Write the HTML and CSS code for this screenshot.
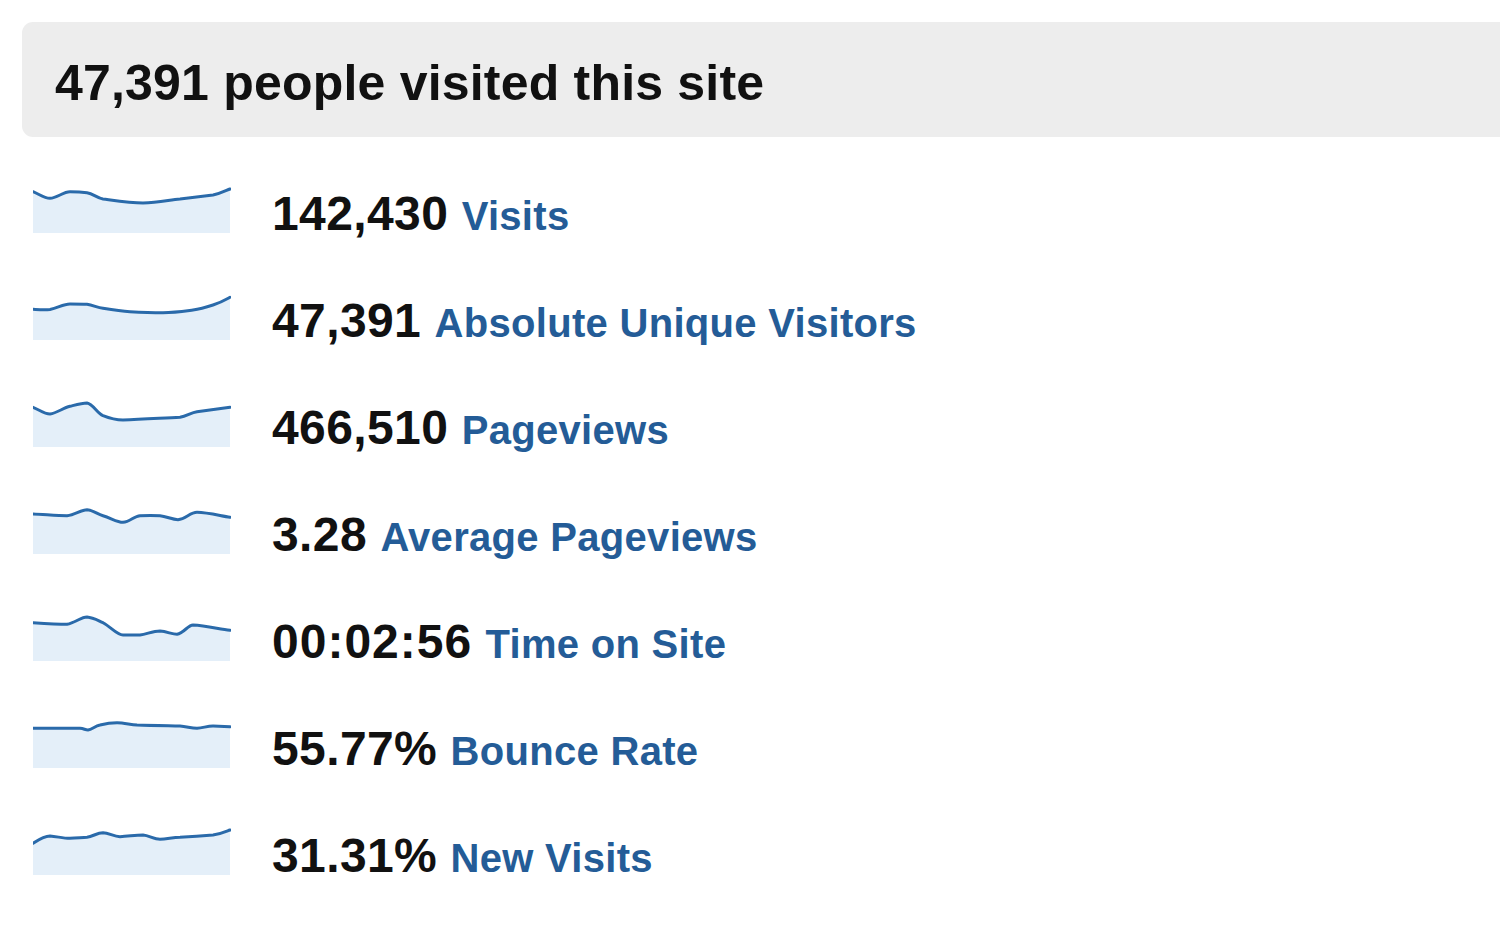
FILE: index.html
```html
<!DOCTYPE html>
<html>
<head>
<meta charset="utf-8">
<link rel="stylesheet" href="styles.css">
</head>
<body>
<div class="page">
  <div class="header">47,391 people visited this site</div>
  <div class="rows">
    <div class="row">
      <svg class="spark" viewBox="0 0 198 50" width="198" height="50">
        <path class="fill" d="M0,8.7 C6,11 11,15.3 17,15.3 C24,15.3 30,8.7 37,8.7 C44,8.7 49,9 54,9.7 C60,10.5 64,15 70,16 C85,18 98,20 110,20 C125,20 136,17 147,16 C160,14.5 172,13 180,12 C188,10.5 193,7.5 197,6 L197,50 L0,50 Z"/>
        <path class="line" d="M0,8.7 C6,11 11,15.3 17,15.3 C24,15.3 30,8.7 37,8.7 C44,8.7 49,9 54,9.7 C60,10.5 64,15 70,16 C85,18 98,20 110,20 C125,20 136,17 147,16 C160,14.5 172,13 180,12 C188,10.5 193,7.5 197,6"/>
      </svg>
      <div class="text"><span class="num">142,430</span> <span class="label">Visits</span></div>
    </div>
    <div class="row">
      <svg class="spark" viewBox="0 0 198 50" width="198" height="50">
        <path class="fill" d="M0,19.3 C6,19.6 11,20 17,19.5 C25,18 30,14 37,14 C44,14 49,14 54,14.3 C60,15 64,17.5 70,18.3 C80,20 88,21.3 97,21.7 C108,22.3 120,22.7 130,22.7 C142,22.5 152,21 160,20 C168,19 174,17 180,15 C188,12.5 193,9.5 197,7.3 L197,50 L0,50 Z"/>
        <path class="line" d="M0,19.3 C6,19.6 11,20 17,19.5 C25,18 30,14 37,14 C44,14 49,14 54,14.3 C60,15 64,17.5 70,18.3 C80,20 88,21.3 97,21.7 C108,22.3 120,22.7 130,22.7 C142,22.5 152,21 160,20 C168,19 174,17 180,15 C188,12.5 193,9.5 197,7.3"/>
      </svg>
      <div class="text"><span class="num">47,391</span> <span class="label">Absolute Unique Visitors</span></div>
    </div>
    <div class="row">
      <svg class="spark" viewBox="0 0 198 50" width="198" height="50">
        <path class="fill" d="M0,10.3 C6,12.5 11,17 17,17 C24,16 30,11 37,9.3 C44,7.5 49,6 54,6 C60,7 64,16 70,18.7 C77,21.5 83,23 90,23 C110,22.5 130,21 147,20.3 C154,19 158,15.5 164,14.7 C177,13 188,11.5 197,10.3 L197,50 L0,50 Z"/>
        <path class="line" d="M0,10.3 C6,12.5 11,17 17,17 C24,16 30,11 37,9.3 C44,7.5 49,6 54,6 C60,7 64,16 70,18.7 C77,21.5 83,23 90,23 C110,22.5 130,21 147,20.3 C154,19 158,15.5 164,14.7 C177,13 188,11.5 197,10.3"/>
      </svg>
      <div class="text"><span class="num">466,510</span> <span class="label">Pageviews</span></div>
    </div>
    <div class="row">
      <svg class="spark" viewBox="0 0 198 50" width="198" height="50">
        <path class="fill" d="M0,10 C12,10.5 24,11.7 34,11.7 C42,11 48,5.7 54,5.7 C60,6 64,10 70,11.7 C78,14 84,18.3 90,18.3 C97,18 101,12 107,11.7 C114,11.5 121,11.5 127,11.7 C134,12.5 139,15.7 145,15.7 C153,15 157,8.3 164,8.3 C175,8.5 188,12 197,13.3 L197,50 L0,50 Z"/>
        <path class="line" d="M0,10 C12,10.5 24,11.7 34,11.7 C42,11 48,5.7 54,5.7 C60,6 64,10 70,11.7 C78,14 84,18.3 90,18.3 C97,18 101,12 107,11.7 C114,11.5 121,11.5 127,11.7 C134,12.5 139,15.7 145,15.7 C153,15 157,8.3 164,8.3 C175,8.5 188,12 197,13.3"/>
      </svg>
      <div class="text"><span class="num">3.28</span> <span class="label">Average Pageviews</span></div>
    </div>
    <div class="row">
      <svg class="spark" viewBox="0 0 198 50" width="198" height="50">
        <path class="fill" d="M0,11.7 C12,12.5 24,13.3 34,13.3 C42,12 48,6 54,6 C60,6.5 64,9 70,11.7 C78,16 84,24 90,24 C96,24 101,24 107,24 C114,23 120,20 127,20 C134,20.5 139,23.3 144,23.3 C151,22 155,14 160,14 C173,14.5 186,18 197,19.3 L197,50 L0,50 Z"/>
        <path class="line" d="M0,11.7 C12,12.5 24,13.3 34,13.3 C42,12 48,6 54,6 C60,6.5 64,9 70,11.7 C78,16 84,24 90,24 C96,24 101,24 107,24 C114,23 120,20 127,20 C134,20.5 139,23.3 144,23.3 C151,22 155,14 160,14 C173,14.5 186,18 197,19.3"/>
      </svg>
      <div class="text"><span class="num time">00:02:56</span> <span class="label">Time on Site</span></div>
    </div>
    <div class="row">
      <svg class="spark" viewBox="0 0 198 50" width="198" height="50">
        <path class="fill" d="M0,10.3 C15,10.3 32,10.3 47,10.3 C51,10.5 52,12 55,12 C59,11.5 62,8 67,7 C73,5.5 78,4.7 84,4.7 C91,4.8 97,6.5 104,7 C118,7.5 133,7.7 147,8 C154,8.5 158,10.3 164,10.3 C170,10 174,8 180,8 C186,8.2 192,8.5 197,8.7 L197,50 L0,50 Z"/>
        <path class="line" d="M0,10.3 C15,10.3 32,10.3 47,10.3 C51,10.5 52,12 55,12 C59,11.5 62,8 67,7 C73,5.5 78,4.7 84,4.7 C91,4.8 97,6.5 104,7 C118,7.5 133,7.7 147,8 C154,8.5 158,10.3 164,10.3 C170,10 174,8 180,8 C186,8.2 192,8.5 197,8.7"/>
      </svg>
      <div class="text"><span class="num">55.77%</span> <span class="label">Bounce Rate</span></div>
    </div>
    <div class="row">
      <svg class="spark" viewBox="0 0 198 50" width="198" height="50">
        <path class="fill" d="M0,18.3 C5,15 11,11 17,11 C24,11.5 30,13.3 37,13.3 C44,13 49,12.5 54,12.3 C60,11.5 64,7.7 70,7.7 C76,8 81,11.7 87,11.7 C95,11.5 102,10 110,10 C116,10.5 121,14.3 127,14.3 C134,14 140,12.5 147,12.3 C158,11.5 169,10.8 180,10 C188,9 193,6.5 197,5 L197,50 L0,50 Z"/>
        <path class="line" d="M0,18.3 C5,15 11,11 17,11 C24,11.5 30,13.3 37,13.3 C44,13 49,12.5 54,12.3 C60,11.5 64,7.7 70,7.7 C76,8 81,11.7 87,11.7 C95,11.5 102,10 110,10 C116,10.5 121,14.3 127,14.3 C134,14 140,12.5 147,12.3 C158,11.5 169,10.8 180,10 C188,9 193,6.5 197,5"/>
      </svg>
      <div class="text"><span class="num">31.31%</span> <span class="label">New Visits</span></div>
    </div>
  </div>
</div>
</body>
</html>
```
FILE: styles.css
```css
html, body {
  margin: 0;
  padding: 0;
  background: #ffffff;
  overflow: hidden;
}

.page {
  width: 1500px;
  height: 935px;
  overflow: hidden;
  font-family: "Liberation Sans", Arial, sans-serif;
}

.header {
  margin: 22px -30px 0 22px;
  height: 115px;
  box-sizing: border-box;
  padding: 36px 0 0 33px;
  background: #ededed;
  border-radius: 11px;
  font-size: 50px;
  line-height: 50px;
  font-weight: bold;
  color: #111111;
  letter-spacing: 0.2px;
  white-space: nowrap;
}

.rows {
  display: flex;
  flex-direction: column;
  gap: 57px;
  margin-top: 46px;
  padding-left: 33px;
}

.row {
  display: flex;
  align-items: flex-start;
  height: 50px;
}

.spark {
  display: block;
  flex: none;
  width: 198px;
  height: 50px;
}

.spark .fill {
  fill: #e4eff9;
  stroke: none;
}

.spark .line {
  fill: none;
  stroke: #2a6aaa;
  stroke-width: 3;
  stroke-linecap: round;
  stroke-linejoin: round;
}

.text {
  margin-left: 41px;
  padding-top: 6px;
  font-size: 48px;
  line-height: 50px;
  white-space: nowrap;
}

.num {
  font-weight: bold;
  color: #111111;
  letter-spacing: 0.4px;
}

.num.time {
  letter-spacing: 1px;
}

.label {
  font-size: 40px;
  font-weight: bold;
  color: #245c97;
  letter-spacing: 0.3px;
}
```
